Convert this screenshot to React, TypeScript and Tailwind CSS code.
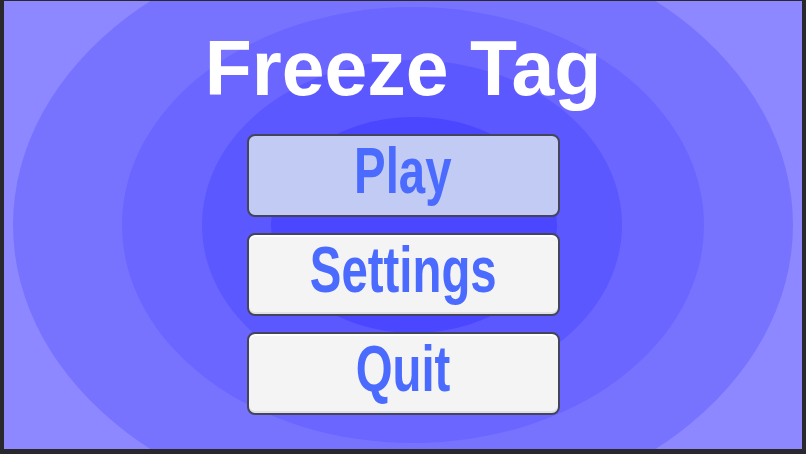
const rings = [
  { cx: 399, cy: 224, rx: 390, ry: 294, fill: '#7773ff' },
  { cx: 409, cy: 224, rx: 291, ry: 218, fill: '#6a66ff' },
  { cx: 408, cy: 224, rx: 210, ry: 165, fill: '#5c58ff' },
  { cx: 410, cy: 224, rx: 143, ry: 108, fill: '#4b46ff' },
];

function Backdrop() {
  return (
    <svg className="absolute inset-0 h-full w-full" viewBox="0 0 798 448" preserveAspectRatio="none">
      <rect width="798" height="448" fill="#8d88ff" />
      {rings.map((r, i) => (
        <ellipse key={i} cx={r.cx} cy={r.cy} rx={r.rx} ry={r.ry} fill={r.fill} />
      ))}
    </svg>
  );
}

function MenuButton({ label, active }: { label: string; active?: boolean }) {
  return (
    <button
      className={
        active
          ? 'flex h-[83px] w-[313px] items-center justify-center rounded-[8px] border-2 border-[#44455a] bg-[#c1cbf4] pb-[10px]'
          : 'flex h-[83px] w-[313px] items-center justify-center rounded-[8px] border-2 border-[#44455a] bg-[#f4f4f5] pb-[10px] shadow-[inset_0_2px_0_#ffffff,inset_0_-2px_0_#e2e2e6]'
      }
    >
      <span className="inline-block scale-x-[0.74] font-['Liberation_Sans',Arial,sans-serif] text-[64px] font-bold leading-none text-[#4b6bff]">
        {label}
      </span>
    </button>
  );
}

export default function App() {
  return (
    <div className="h-[454px] w-[806px] bg-[#29292d] pb-[5px] pl-[4px] pr-[4px] pt-[1px]">
      <div className="relative h-full w-full overflow-hidden">
        <Backdrop />
        <div className="relative flex flex-col items-center pt-[29px]">
          <h1 className="font-['Liberation_Sans',Arial,sans-serif] text-[77px] font-bold leading-none text-white">
            Freeze Tag
          </h1>
          <div className="mt-[27px] flex flex-col gap-4">
            <MenuButton label="Play" active />
            <MenuButton label="Settings" />
            <MenuButton label="Quit" />
          </div>
        </div>
      </div>
    </div>
  );
}
